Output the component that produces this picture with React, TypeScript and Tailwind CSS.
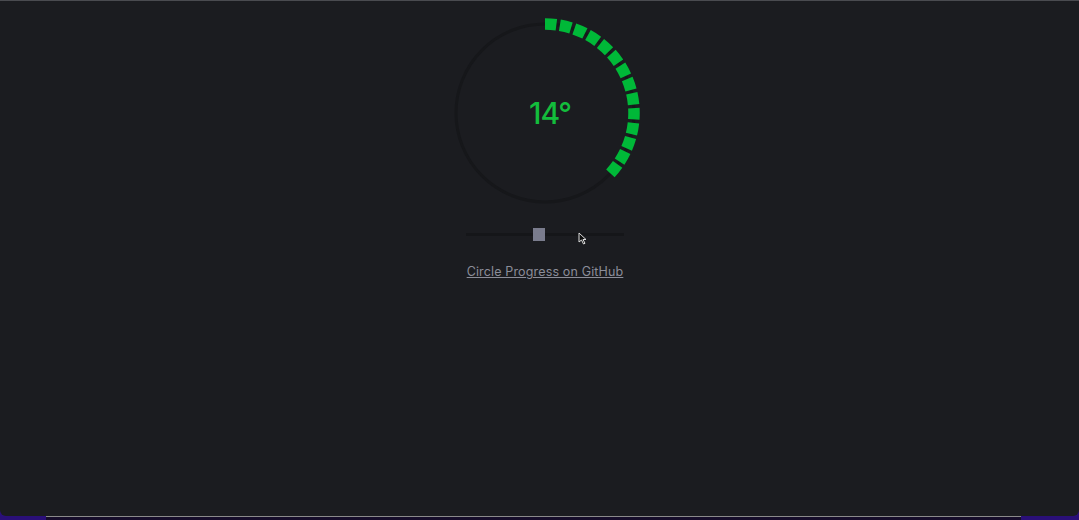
import React from "react";

const CX = 100;
const CY = 100;
const R = 89;
const DASHES = 14;

function dashPattern() {
  const parts: number[] = [];
  for (let i = 0; i < DASHES; i++) {
    parts.push(11.5, 3.45);
  }
  parts[parts.length - 1] = 1000;
  return parts.join(" ");
}

function Dial() {
  return (
    <div className="relative h-[200px] w-[200px]">
      <svg width="200" height="200" viewBox="0 0 200 200" className="absolute inset-0">
        <circle cx={CX} cy={CY} r={R} fill="none" stroke="#16171a" strokeWidth="3" />
        <circle
          cx={CX}
          cy={CY}
          r={R}
          fill="none"
          stroke="#00b838"
          strokeWidth="11.5"
          strokeDasharray={dashPattern()}
          transform={`rotate(-90 ${CX} ${CY})`}
        />
      </svg>
      <div className="absolute inset-0 flex items-center justify-center pl-[10px]">
        <span className="text-[30px] font-medium text-[#13bd3c] font-['Inter',sans-serif] tracking-[-1px]">14°</span>
      </div>
    </div>
  );
}

export default function App() {
  return (
    <div className="flex h-[520px] w-[1079px] flex-col bg-[#2a0f78]">
      <div className="flex flex-1 flex-col items-center rounded-b-[6px] border-t border-[#4a4b50] bg-[#1b1c20] pl-[11px]">
        <div className="mt-[12px]">
          <Dial />
        </div>
        <div className="relative mt-[15px] flex h-[13px] w-[158px] items-center">
          <div className="h-[3px] w-full bg-[#151619]" />
          <div className="absolute left-[67px] top-0 h-[13px] w-[12px] bg-[#7a7c8d]" />
          <svg className="absolute left-[112px] top-[4px]" width="10" height="14" viewBox="0 0 10 14">
            <path d="M1 1 L1 10 L3.5 8 L5.5 12 L7 11.3 L5 7.5 L8 7.5 Z" fill="#111" stroke="#ddd" strokeWidth="1" />
          </svg>
        </div>
        <a
          href="#"
          className="mt-[22px] text-[12.5px] text-[#8b8d99] underline font-['Inter',sans-serif] tracking-[0.15px]"
        >
          Circle Progress on GitHub
        </a>
      </div>
      <div className="flex h-[4px]">
        <div className="w-[46px]" />
        <div className="flex-1 border-t border-[#8a8a8a] bg-[#160d2a]" />
        <div className="w-[58px]" />
      </div>
    </div>
  );
}
